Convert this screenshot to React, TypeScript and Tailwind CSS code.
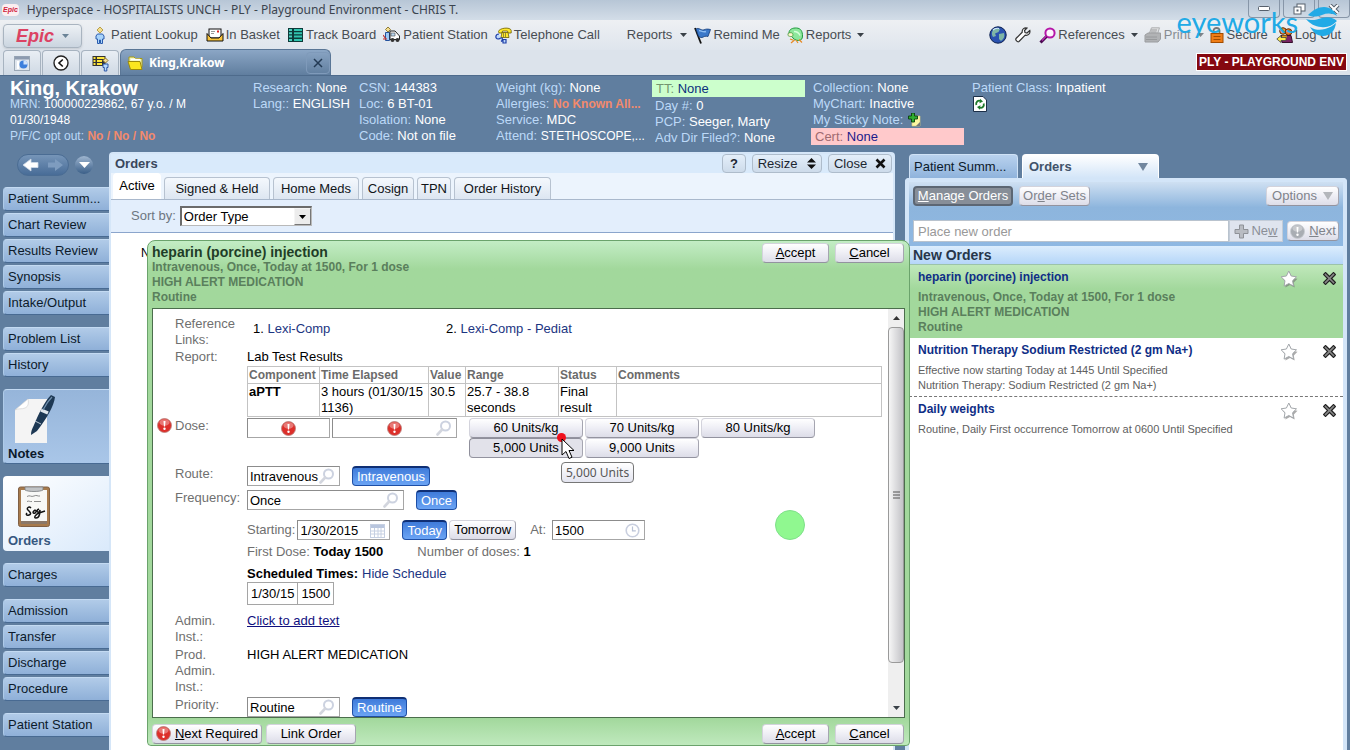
import type { ReactNode } from "react";

/* ---------- icons ---------- */

const Svg = ({ w, h, box, children, cls = "" }: { w: number; h: number; box?: string; children: ReactNode; cls?: string }) => (
  <svg width={w} height={h} viewBox={box ?? `0 0 ${w} ${h}`} className={`shrink-0 ${cls}`} aria-hidden="true">
    {children}
  </svg>
);

const Caret = ({ color = "#3a4148" }: { color?: string }) => (
  <Svg w={7} h={4}>
    <path d="M0 0h7L3.500 4z" fill={color} />
  </Svg>
);

const Alert = ({ gray = false, size = 15 }: { gray?: boolean; size?: number }) => (
  <Svg w={size} h={size} box="0 0 15 15">
    <circle cx="7.500" cy="7.500" r="7" fill={gray ? "#a9adb3" : "#dd2f2a"} stroke={gray ? "#c8cbd0" : "#b8837f"} strokeWidth="0.800" />
    <ellipse cx="7.500" cy="4.500" rx="5" ry="3.200" fill="#fff" opacity="0.350" />
    <path d="M6.500 3h2l-.4 5.500h-1.200z" fill="#fff" />
    <circle cx="7.500" cy="10.800" r="1.200" fill="#fff" />
  </Svg>
);

const Lens = () => (
  <Svg w={16} h={16} cls="mr-1">
    <circle cx="9.500" cy="6" r="4.500" fill="#fff" stroke="#ccd2e0" strokeWidth="2" />
    <path d="M6.200 9.500L1.500 14.500" stroke="#d3d6de" strokeWidth="2.600" strokeLinecap="round" />
  </Svg>
);

const CalendarIcon = () => (
  <Svg w={15} h={15} cls="mr-1">
    <rect x="0.500" y="1.500" width="14" height="13" fill="#fff" stroke="#c6d0e2" />
    <path d="M1 3.500h13" stroke="#b9c6de" strokeWidth="3" />
    <path d="M1 8h13M1 11h13M4.500 5v9M8 5v9M11 5v9" stroke="#c6d0e2" />
  </Svg>
);

const ClockIcon = () => (
  <Svg w={15} h={15} cls="mr-1">
    <circle cx="7.500" cy="7.500" r="6.300" fill="#fff" stroke="#c9cfdf" strokeWidth="1.600" />
    <path d="M7.500 3.500v4.300h3.300" stroke="#b9c2d6" strokeWidth="1.200" fill="none" />
  </Svg>
);

const PersonIcon = () => (
  <Svg w={10} h={17}>
    <path d="M5 0l3 3-3 3-3-3z" fill="#f3dd8e" stroke="#b8a04a" />
    <path d="M2.500 7h5l1.500 2v3H7.500v4.500H5.500V13h-1v3.500h-2V12H1V9z" fill="#a9d4fb" stroke="#2b5cae" />
  </Svg>
);

const BasketIcon = () => (
  <Svg w={18} h={14}>
    <rect x="3" y="1" width="12" height="9" fill="#fff" stroke="#111" />
    <path d="M5 3.500h4M5 5.500h3" stroke="#999" />
    <rect x="11" y="2.500" width="2" height="2" fill="#d22" />
    <path d="M1 5.500v7.500h16V5.500L13 10H5z" fill="#f9c33a" stroke="#111" />
  </Svg>
);

const BoardIcon = () => (
  <Svg w={15} h={14}>
    <rect width="15" height="14" fill="#0d3b3a" />
    <path d="M1 2h3M1 5.300h3M1 8.600h3M1 12h3" stroke="#49d0be" strokeWidth="2" />
    <path d="M6 2h8M6 5.300h8M6 8.600h8M6 12h8" stroke="#2fc4ae" strokeWidth="2" />
  </Svg>
);

const StationIcon = () => (
  <Svg w={18} h={16}>
    <path d="M5 0l2.500 2.500L5 5 2.500 2.500z" fill="#f3dd8e" stroke="#8f7b35" />
    <path d="M2.500 5.500h4v8h-4z" fill="#9cc9f5" stroke="#24519c" />
    <path d="M7 4h5l4.500 5v3.500H7z" fill="#fff" stroke="#222" />
    <path d="M8 6h4v3H8z" fill="#b9d7f2" stroke="#444" strokeWidth="0.600" />
    <circle cx="9.500" cy="13" r="2" fill="#333" />
    <circle cx="14.500" cy="13" r="2" fill="#333" />
    <path d="M0 8l3 4M0 12h4" stroke="#b33" strokeWidth="1.200" />
  </Svg>
);

const PhoneIcon = () => (
  <Svg w={17} h={17}>
    <path d="M3.500 4.500C4 1 15.500-.5 16.200 3.500v2.500h-3l-.7-2h-5L7 6H4z" fill="#ffe92e" stroke="#6b5c00" strokeWidth="0.800" />
    <path d="M7 5.500h6l1 5H6z" fill="#ffe92e" stroke="#6b5c00" strokeWidth="0.800" />
    <path d="M8 7h4M8 9h4" stroke="#333" strokeDasharray="1 1" />
    <path d="M4 7c-4 0-4 5-1 5 2 0 3-2 4-1s0 3-1 3.500M8 12.500h3v3.500H8z" fill="#bcd8fa" stroke="#1f3fa8" strokeWidth="1.200" />
  </Svg>
);

const FlagIcon = () => (
  <Svg w={17} h={17}>
    <path d="M1 1l6 15.500" stroke="#111" strokeWidth="1.800" />
    <path d="M2 2c3-2 5 2 8 .8 2-.8 3-1 6.500-.3l-2.500 7c-3-1-4 .5-6 1C6.500 11 5.500 9.500 4.500 9.200z" fill="#3a78c9" stroke="#123b78" strokeWidth="0.800" />
    <path d="M5 3.500c2 0 4 2 7 1" stroke="#8bbcf2" strokeWidth="1.400" fill="none" />
  </Svg>
);

const ParrotIcon = () => (
  <Svg w={17} h={17}>
    <path d="M2 6C2 2 6 .8 9.500 1c4.500.3 6 3.500 6 8 0 3-1.500 4.500-4 4.500S6 12 5 9.500C4 9 2 8.500 2 6z" fill="#8de79c" stroke="#1f9a3c" />
    <path d="M1 6.500c2-1.500 5-1 5 1.200C6 10 3 10 1 8.500z" fill="#fff6d0" stroke="#4b9a3c" strokeWidth="0.800" />
    <path d="M7 4.500c3 0 5 1.500 6 4" stroke="#d6ffd9" strokeWidth="1.400" fill="none" />
    <path d="M3 12l4 1.500L4 16M9 13l2 3M12 12.500l3 3" stroke="#e88a25" strokeWidth="1.200" fill="none" />
  </Svg>
);

const GlobeIcon = () => (
  <Svg w={18} h={18}>
    <circle cx="9" cy="9" r="8.200" fill="#2a52b0" stroke="#0a1f4e" />
    <path d="M4 4c2-2 5-2.500 7-1L9.500 6 6 7.500 7 10l-3 1C2.500 9 2.500 6 4 4zM10 8l5-1c1 3 0 6-3 8l-2-2z" fill="#7fb6a6" />
    <path d="M4 4c2-2 4-2 6-1.500" stroke="#cfe6ff" strokeWidth="1.200" fill="none" />
  </Svg>
);

const WrenchIcon = () => (
  <Svg w={16} h={16}>
    <path
      d="M14.800 3.500L12 6 10 5.500 9.500 3.500 12 1C9.500.3 6.800 2 7.200 5.200L1 11.500c-1 1.500 1.500 4 3 3l6.200-6.300c3 .6 5.300-1.700 4.600-4.700z"
      fill="#fff"
      stroke="#333"
      strokeWidth="1.200"
    />
  </Svg>
);

const PinkLens = () => (
  <Svg w={17} h={17}>
    <circle cx="11" cy="6" r="4.600" fill="#fdf3fd" stroke="#b516a8" strokeWidth="2" />
    <path d="M7.500 9.500L1.500 15.500" stroke="#4a0b52" strokeWidth="3" />
    <path d="M7.200 9.200L3 13.500" stroke="#c42ab8" strokeWidth="1.200" />
  </Svg>
);

const PrinterIcon = () => (
  <Svg w={18} h={16}>
    <path d="M5 7L7.500.8h8L13.500 7z" fill="#d8d8d8" stroke="#888" />
    <path d="M1 8l3-2h12.500v6L14 15H1z" fill="#8f8f8f" stroke="#6d6d6d" />
    <path d="M2 10h11M2 12.500h11M7 3h6M6.500 5h6" stroke="#666" />
  </Svg>
);

const LockIcon = () => (
  <Svg w={14} h={16}>
    <path d="M3.500 7V4c0-4 6-4 6 0v3" fill="none" stroke="#777" strokeWidth="1.800" />
    <rect x="1" y="6.500" width="12" height="9" fill="#ef7d16" stroke="#a24c00" />
    <path d="M3.500 9.500h7M3.500 12.500h7" stroke="#a24c00" />
  </Svg>
);

const LogoutIcon = () => (
  <Svg w={17} h={16}>
    <circle cx="7" cy="4" r="3.300" fill="#f0903c" stroke="#5c2b06" />
    <circle cx="12.500" cy="5" r="3.300" fill="#e8761c" stroke="#5c2b06" />
    <path d="M5 8.500h10l1.500 7H6z" fill="#7a2464" stroke="#35102c" />
    <path d="M6 8.500h5l-1 4H6z" fill="#d89a17" />
    <path d="M.8 12L5 8.500v2h5v3H5v2z" fill="#ffed4a" stroke="#444" strokeWidth="0.800" />
  </Svg>
);

const FolderIcon = () => (
  <Svg w={16} h={14}>
    <path d="M2 6V1h5l1.500 1.500H15V11" fill="#f5f7b9" stroke="#a79b12" />
    <path d="M1 5.500h12l2 8H3.500z" fill="#fbe61f" stroke="#9d8a0c" />
    <path d="M4 3.500h9" stroke="#fff" strokeWidth="1.500" />
  </Svg>
);

const ScreenIcon = () => (
  <Svg w={16} h={15}>
    <rect x="0.500" y="0.500" width="15" height="14" fill="#dfe6ee" stroke="#9aa7b5" />
    <path d="M1 2h14" stroke="#8d9bb0" strokeWidth="3" />
    <path d="M4 5v8" stroke="#fff" strokeWidth="2" />
    <circle cx="9.500" cy="8.500" r="4" fill="#3c7fdc" />
    <path d="M9.500 8.500V4.500a4 4 0 0 1 4 4z" fill="#cfe2fb" />
  </Svg>
);

const BackClock = () => (
  <Svg w={16} h={16}>
    <circle cx="8" cy="8" r="7" fill="#fff" stroke="#222" strokeWidth="1.400" />
    <path d="M9.800 4.500L6 8l3.800 3.500" stroke="#111" strokeWidth="1.600" fill="none" />
  </Svg>
);

const ListIcon = () => (
  <Svg w={17} h={17}>
    <rect x="0.500" y="1" width="13" height="10" fill="#333" />
    <path d="M1.500 3h2M1.500 6h2M1.500 9h2M5 3h7.500M5 6h5M5 9h5" stroke="#ffe63b" strokeWidth="2" />
    <path d="M13.500 3l2.500 2.500L13.500 8 11 5.500z" fill="#f6df96" stroke="#8b7632" />
    <path d="M11 9h5v3.500h-1.200V16h-2.500v-3.500H11z" fill="#b9dafc" stroke="#2a56a5" />
  </Svg>
);

const StickyIcon = () => (
  <Svg w={14} h={14}>
    <path d="M5 3h8v10H5z" fill="#fdf6a2" stroke="#d9cf7d" strokeWidth="0.600" />
    <path d="M9 13l4-4v4z" fill="#777" />
    <path d="M4.500 0h3v3h3v3h-3v3h-3V6h-3V3h3z" fill="#2fae2f" stroke="#0a400a" strokeWidth="0.900" />
  </Svg>
);

const RefreshIcon = () => (
  <Svg w={14} h={16}>
    <path d="M.5.500H10L13.500 4v11.500H.5z" fill="#fff" stroke="#1c2f48" />
    <path d="M3.300 9C2.500 6 5 4 7.500 5" stroke="#1d7a2a" strokeWidth="1.800" fill="none" />
    <path d="M7 2.800L10 5.500 6.500 7.300z" fill="#1d7a2a" />
    <path d="M10.700 7.500c.8 3-1.700 5-4.200 4" stroke="#1d7a2a" strokeWidth="1.800" fill="none" />
    <path d="M7 13.700L4 11l3.500-1.800z" fill="#1d7a2a" />
  </Svg>
);

const Star = () => (
  <Svg w={20} h={20}>
    <path d="M11 3.200l2.300 4.700 5.200.8-3.700 3.700.9 5.200-4.700-2.500-4.700 2.500.9-5.200-3.700-3.700 5.200-.8z" fill="#666" opacity="0.550" />
    <path d="M9.800 1l2.400 5 5.300.8-3.900 3.900.9 5.400-4.700-2.600-4.700 2.600.9-5.400L2.100 6.800 7.400 6z" fill="#fff" stroke="#a3a7ab" />
  </Svg>
);

const CrossMark = () => (
  <Svg w={13} h={13}>
    <path d="M2.500 2.500l8 8M10.500 2.500l-8 8" stroke="#222" strokeWidth="4" strokeLinecap="square" />
    <path d="M2.500 2.500l8 8M10.500 2.500l-8 8" stroke="#888" strokeWidth="1.600" strokeLinecap="square" />
  </Svg>
);

const NoteArt = () => (
  <Svg w={42} h={50}>
    <path d="M1 16L14 5h19v44H1z" fill="#f4f4f4" />
    <path d="M1 16L14 5c1 4 0 8-3 9-3 1.500-7 0-10 2z" fill="#fff" stroke="#ccc" strokeWidth="0.600" />
    <path d="M37 1l4 2c-1 9-8 21-18 34l-6 4c0-4 1-6 3-10C25 19 31 7 37 1z" fill="#1d3854" />
    <path d="M27 16l7 3" stroke="#dfe6ec" strokeWidth="3.500" />
    <path d="M21 27l6 3" stroke="#b9c6d2" strokeWidth="1" />
    <path d="M38 3c-4 4-7 9-9 13" stroke="#6f8fae" strokeWidth="1.200" fill="none" />
  </Svg>
);

const ClipboardArt = () => (
  <Svg w={32} h={41}>
    <rect x="0.500" y="1" width="31" height="39.500" rx="2" fill="#a77a4c" stroke="#806045" />
    <rect x="3" y="4" width="26" height="31" fill="#f8f8f6" />
    <path d="M3 35h26v3H3z" fill="#8b7868" />
    <path d="M7 1h18v3c-3 2-15 2-18 0z" fill="#c2c4c6" stroke="#7b7d80" strokeWidth="0.800" />
    <path d="M9 10.500c3-2 4 1 7-.5s3 .5 6 0M9 15.500c2-1 3 .5 5 0m2 0h7" stroke="#8c8c8c" fill="none" />
    <path d="M13 22c-2-2-5 0-3 2s4 4 1 5-3-1-2-2M15 26c3-4 4 0 2 1s-3-1 0-3M21 23c-3 1-2 4 0 3l1-2c0 4-1 8-4 8s0-4 3-5l6-2" stroke="#111" strokeWidth="1.500" fill="none" />
  </Svg>
);

/* ---------- shared pieces ---------- */

const ToolItem = ({ icon, label, caret, cls = "" }: { icon?: ReactNode; label: string; caret?: boolean; cls?: string }) => (
  <button type="button" className={`flex items-center gap-1 whitespace-nowrap text-[13px] leading-4 text-[#484d53] ${cls}`}>
    {icon}
    <span>{label}</span>
    {caret && (
      <span className="ml-1">
        <Caret />
      </span>
    )}
  </button>
);

const Field = ({ label, children, cls = "text-white" }: { label: string; children: ReactNode; cls?: string }) => (
  <div className="truncate">
    <span className="text-[#bcd9f8]">{label}</span> <span className={cls}>{children}</span>
  </div>
);

const SideButton = ({ children }: { children: ReactNode }) => (
  <button
    type="button"
    className="h-6 w-full truncate rounded-l border-y border-l border-t-[#c3daf2] border-b-[#486a92] border-l-[#aecbe9] bg-gradient-to-b from-[#b1cbe8] to-[#8fb0d8] pl-1 text-left text-[13px] leading-5 text-[#0c1a2b]"
  >
    {children}
  </button>
);

const PushButton = ({ children, cls = "" }: { children: ReactNode; cls?: string }) => (
  <button
    type="button"
    className={`flex h-5 items-center justify-center whitespace-nowrap rounded border border-[#d3d3dc] border-r-[#a5a5b0] border-b-[#93939f] bg-gradient-to-b from-white via-[#eeeef5] to-[#dddde8] text-[13px] leading-4 text-black ${cls}`}
  >
    {children}
  </button>
);

const BlueButton = ({ children }: { children: ReactNode }) => (
  <button
    type="button"
    className="h-5 rounded border border-[#1e4fa6] border-t-2 border-t-[#0f2f74] bg-gradient-to-b from-[#3f7bda] to-[#6ba4f4] px-1 text-[13px] leading-4 text-white"
  >
    {children}
  </button>
);

const TextBox = ({ id, value, icon, cls = "", label }: { id: string; value: string; icon?: ReactNode; cls?: string; label?: string }) => (
  <div className={`flex h-5 items-center border border-[#a6a6a6] border-t-[#8c8c8c] border-l-[#8c8c8c] bg-white ${cls}`}>
    <input id={id} aria-label={label} defaultValue={value} className="h-full w-full min-w-0 flex-1 bg-transparent pl-0.5 text-[13px] text-black outline-none" />
    {icon}
  </div>
);

const FormRow = ({ label, htmlFor, alert, children, cls = "" }: { label: ReactNode; htmlFor?: string; alert?: boolean; children: ReactNode; cls?: string }) => (
  <div className={`grid grid-cols-[18px_72px_1fr] ${cls}`}>
    <div>{alert && <Alert />}</div>
    <label htmlFor={htmlFor} className="text-[#6f6f6f]">
      {label}
    </label>
    <div className="min-w-0">{children}</div>
  </div>
);

const U = ({ children }: { children: ReactNode }) => <span className="underline underline-offset-1">{children}</span>;

/* ---------- top of the window ---------- */

function TitleBar() {
  return (
    <header className="relative flex h-5 shrink-0 items-center bg-gradient-to-b from-[#b7c6d6] to-[#d3dde8]">
      <div className="ml-0.5 rounded-sm bg-[#fbeef0] px-px text-[7px] leading-3 font-bold text-[#d0203c] italic">Epic</div>
      <h1 className="ml-2 font-['Noto_Sans','Open_Sans',sans-serif] text-[12px] leading-5 text-[#3b444f]">Hyperspace - HOSPITALISTS UNCH - PLY - Playground Environment - CHRIS T.</h1>
      <div className="ml-auto flex h-full gap-[3px]">
        <button type="button" aria-label="Minimize" className="flex h-[18px] w-8 items-center justify-center rounded-b border border-t-0 border-[#8796a8]">
          <Svg w={12} h={5}>
            <rect x="0.500" y="0.500" width="11" height="4" rx="1" fill="#fff" stroke="#56606c" />
          </Svg>
        </button>
        <button type="button" aria-label="Restore" className="flex h-[18px] w-8 items-center justify-center rounded-b border border-t-0 border-[#8796a8]">
          <Svg w={13} h={12}>
            <rect x="4" y="1" width="8" height="7" fill="#fff" stroke="#56606c" />
            <rect x="1" y="4" width="7" height="7" fill="#fff" stroke="#56606c" />
            <rect x="3.500" y="6.500" width="2" height="2" fill="#56606c" />
          </Svg>
        </button>
        <button type="button" aria-label="Close window" className="flex h-[18px] w-8 items-center justify-center rounded-b border border-t-0 border-[#8796a8]">
          <Svg w={12} h={10}>
            <path d="M2 1l8 8M10 1L2 9" stroke="#56606c" strokeWidth="4" />
            <path d="M2 1l8 8M10 1L2 9" stroke="#fff" strokeWidth="2" />
          </Svg>
        </button>
      </div>
      <div className="absolute top-1.5 right-3 z-20 flex items-center gap-2 text-[#21aae6]">
        <span className="font-['Lato',sans-serif] text-[29px] leading-8">eyeworks</span>
        <Svg w={32} h={32}>
          <path d="M2 9C7 4 12 1 18 1c6 0 11 4 13 9-5-3-10-3-15-1-6 2-10 2-14 0z" fill="#21aae6" />
          <path d="M0 13c6 2 10 1 16-1 6-1.500 11-.5 15 3-5 5-10 7-16 6C9 20.500 4 18 0 13z" fill="#21aae6" />
          <path d="M4 21c5 3 10 3.500 15 2 5-1.300 8-3.500 11-6-1 8-6 13-13 13-6 0-10-4-13-9z" fill="#21aae6" />
        </Svg>
      </div>
    </header>
  );
}

function Toolbar() {
  return (
    <div className="flex h-[30px] shrink-0 items-center bg-gradient-to-b from-[#eef0f3] to-[#dfe5ed]">
      <button
        type="button"
        className="ml-[3px] mt-0.5 flex h-6 w-[79px] items-center justify-center gap-2 rounded border border-[#a9b4c0] bg-gradient-to-b from-[#edf1f5] to-[#cbd5e0] shadow-sm"
      >
        <span className="text-[18px] leading-5 font-bold text-[#dc4263] italic">Epic</span>
        <Caret color="#6b8397" />
      </button>
      <ToolItem cls="ml-[13px] !gap-1.5" icon={<PersonIcon />} label="Patient Lookup" />
      <ToolItem cls="ml-2 !gap-0.5" icon={<BasketIcon />} label="In Basket" />
      <ToolItem cls="ml-2 !gap-[3px]" icon={<BoardIcon />} label="Track Board" />
      <ToolItem cls="ml-[7px] !gap-0.5" icon={<StationIcon />} label="Patient Station" />
      <ToolItem cls="ml-[7px] !gap-0.5" icon={<PhoneIcon />} label="Telephone Call" />
      <ToolItem cls="ml-[27px]" label="Reports" caret />
      <ToolItem cls="ml-[7px] !gap-0.5" icon={<FlagIcon />} label="Remind Me" />
      <ToolItem cls="ml-[7px] !gap-0.5" icon={<ParrotIcon />} label="Reports" caret />
      <div className="ml-auto flex items-center pr-[9px]">
        <button type="button" aria-label="Web">
          <GlobeIcon />
        </button>
        <button type="button" aria-label="Tools" className="ml-2">
          <WrenchIcon />
        </button>
        <ToolItem cls="ml-2 !gap-0.5" icon={<PinkLens />} label="References" caret />
        <ToolItem cls="ml-1.5 !gap-0.5 opacity-60" icon={<PrinterIcon />} label="Print" caret />
        <ToolItem cls="ml-1.5 !gap-[3px]" icon={<LockIcon />} label="Secure" />
        <ToolItem cls="ml-2 !gap-0.5" icon={<LogoutIcon />} label="Log Out" />
      </div>
    </div>
  );
}

function WorkspaceTabs() {
  const small = "flex h-[25px] items-center justify-center rounded-t border border-b-0 border-[#a7b3c0] bg-gradient-to-b from-[#e9eef4] to-[#cfd9e4]";
  return (
    <nav className="flex h-[26px] shrink-0 items-end border-b border-[#4e6b8c] bg-[#dce3eb] pl-[3px]">
      <button type="button" aria-label="Home" className={`w-[38px] ${small}`}>
        <ScreenIcon />
      </button>
      <button type="button" aria-label="Back" className={`ml-px w-[38px] ${small}`}>
        <BackClock />
      </button>
      <button type="button" aria-label="Patient lists" className={`ml-px w-[38px] ${small}`}>
        <ListIcon />
      </button>
      <div className="ml-px flex h-[26px] w-[211px] items-center rounded-t-md border border-b-0 border-[#5a7696] bg-gradient-to-b from-[#8ba6c5] to-[#607e9f] pl-1.5">
        <FolderIcon />
        <span className="ml-1.5 font-['Noto_Sans','Open_Sans',sans-serif] text-[12px] leading-5 font-bold text-white">King,Krakow</span>
        <button type="button" aria-label="Close King,Krakow" className="ml-auto flex h-[22px] w-6 items-center justify-center rounded border border-[#7f9aba]">
          <Svg w={10} h={10}>
            <path d="M1 1l8 8M9 1L1 9" stroke="#233a54" strokeWidth="1.500" />
          </Svg>
        </button>
      </div>
      <div className="mr-[3px] mb-1 ml-auto border border-white bg-[#850810] px-0.5 text-[12px] leading-4 font-bold text-white">PLY - PLAYGROUND ENV</div>
    </nav>
  );
}

function PatientHeader() {
  return (
    <section className="grid h-[76px] shrink-0 grid-cols-[243px_106px_137px_156px_156px_3px_1fr] pt-1 pl-2.5 text-[13px] leading-4 text-white">
      <div>
        <h2 className="text-[20px] leading-4 font-bold">King, Krakow</h2>
        <div className="text-[12px]">
          <Field label="MRN:">100000229862, 67 y.o. / M</Field>
          <div>01/30/1948</div>
          <Field label="P/F/C opt out:" cls="font-bold text-[#f28a6c]">
            No / No / No
          </Field>
        </div>
      </div>
      <div>
        <Field label="Research:">None</Field>
        <Field label="Lang::">ENGLISH</Field>
      </div>
      <div>
        <Field label="CSN:">144383</Field>
        <Field label="Loc:">6 BT-01</Field>
        <Field label="Isolation:">None</Field>
        <Field label="Code:">Not on file</Field>
      </div>
      <div>
        <Field label="Weight (kg):">None</Field>
        <Field label="Allergies:" cls="text-[12px] font-bold text-[#f28a6c]">
          No Known All...
        </Field>
        <Field label="Service:">MDC</Field>
        <Field label="Attend:" cls="text-[12px] text-white">
          STETHOSCOPE,...
        </Field>
      </div>
      <div>
        <div className="mb-px w-[153px] bg-[#ccffcc] pl-1 leading-[17px] text-[#0b2f7c]">
          <span className="text-[#73946f]">TT:</span> None
        </div>
        <div className="pl-[3px]">
          <Field label="Day #:">0</Field>
          <Field label="PCP:">Seeger, Marty</Field>
          <Field label="Adv Dir Filed?:">None</Field>
        </div>
      </div>
      <div />
      <div className="grid grid-cols-[161px_1fr]">
        <div>
          <div className="pl-0.5">
            <Field label="Collection:">None</Field>
            <Field label="MyChart:">Inactive</Field>
            <div className="flex items-center gap-1">
              <span className="text-[#bcd9f8]">My Sticky Note:</span>
              <StickyIcon />
            </div>
          </div>
          <div className="w-[153px] bg-[#ffc9cb] pl-1 leading-[17px] text-[#1b1b8a]">
            <span className="text-[#a06a70]">Cert:</span> None
          </div>
        </div>
        <div>
          <Field label="Patient Class:">Inpatient</Field>
          <button type="button" aria-label="Refresh" className="ml-px block">
            <RefreshIcon />
          </button>
        </div>
      </div>
    </section>
  );
}

/* ---------- activities ---------- */

const groupA = ["Patient Summ...", "Chart Review", "Results Review", "Synopsis", "Intake/Output"];
const groupB = ["Problem List", "History"];
const groupC = ["Admission", "Transfer", "Discharge", "Procedure"];

const SideGroup = ({ items }: { items: string[] }) => (
  <div className="flex flex-col gap-0.5">
    {items.map((t) => (
      <SideButton key={t}>{t}</SideButton>
    ))}
  </div>
);

function Sidebar() {
  return (
    <nav className="flex w-[109px] shrink-0 flex-col gap-3 pt-1 pl-[3px]">
      <div className="flex h-[21px] items-center gap-1.5 pl-3.5">
        <button type="button" aria-label="Back" className="flex h-[22px] w-[52px] items-center rounded-full border border-[#4a6c93] bg-gradient-to-b from-[#7695b8] to-[#486c97] pl-1">
          <Svg w={17} h={14}>
            <path d="M1 7l8-6v3.500h7v5H9V13z" fill="#fff" stroke="#cfdbe8" strokeWidth="0.800" />
          </Svg>
          <Svg w={17} h={14} cls="ml-2">
            <path d="M16 7L8 1v3.500H1v5h7V13z" fill="#7e9cbf" />
          </Svg>
        </button>
        <button type="button" aria-label="History" className="flex h-[18px] w-[18px] items-center justify-center rounded-full bg-gradient-to-b from-[#9fb6d0] to-[#3b5f88]">
          <Svg w={11} h={6}>
            <path d="M0 0h11L5.500 6z" fill="#fff" />
          </Svg>
        </button>
      </div>
      <SideGroup items={groupA} />
      <SideGroup items={groupB} />
      <button
        type="button"
        className="flex h-[75px] flex-col justify-between rounded-l border-y border-l border-t-[#c3daf2] border-b-[#486a92] border-l-[#aecbe9] bg-gradient-to-b from-[#96b5da] to-[#a9c6e8] pt-1 pl-1 text-left text-[13px] leading-5 font-bold text-[#0c1a2b]"
      >
        <span className="ml-1.5">
          <NoteArt />
        </span>
        <span>Notes</span>
      </button>
      <button
        type="button"
        className="-mr-1 flex h-[75px] flex-col justify-between rounded-l bg-gradient-to-br from-white to-[#d9e9fb] pt-2.5 pl-[5px] text-left text-[13px] leading-5 font-bold text-[#365880]"
      >
        <span className="ml-2.5">
          <ClipboardArt />
        </span>
        <span>Orders</span>
      </button>
      <SideButton>Charges</SideButton>
      <SideGroup items={groupC} />
      <SideButton>Patient Station</SideButton>
    </nav>
  );
}

function OrdersPanel() {
  const tab = "flex h-[22px] items-center justify-center rounded-t border border-b-0 border-[#b7c2d0] bg-gradient-to-b from-[#f4f8fd] to-[#dde6f1] text-[13px] text-[#101418]";
  const head = "flex h-[19px] items-center justify-center rounded border border-[#aebccb] bg-gradient-to-b from-[#e4effa] to-[#cddbea] text-[13px] leading-4 text-[#1c2630]";
  return (
    <main className="mt-0.5 flex min-w-0 flex-1 flex-col rounded-t border-x-2 border-t-2 border-[#d5e6f8] bg-white">
      <div className="flex h-[19px] shrink-0 items-center bg-[#d9eafb] pr-px pl-1">
        <h2 className="text-[13px] leading-5 font-bold text-[#39475c]">Orders</h2>
        <button type="button" aria-label="Help" className={`ml-auto w-6 font-bold ${head}`}>
          ?
        </button>
        <button type="button" className={`ml-1.5 w-[70px] gap-2.5 ${head}`}>
          Resize
          <Svg w={9} h={11}>
            <path d="M4.500 0L9 4.500H0zM4.500 11L9 6.500H0z" fill="#111" />
          </Svg>
        </button>
        <button type="button" className={`ml-1.5 w-16 gap-2 ${head}`}>
          Close
          <Svg w={11} h={11}>
            <path d="M1.500 1.500l8 8M9.500 1.500l-8 8" stroke="#111" strokeWidth="2.600" />
          </Svg>
        </button>
      </div>
      <div className="flex h-[27px] shrink-0 items-end gap-[3px] border-b border-[#a9b8cc] bg-[#ecf4fd] pl-0.5">
        <button type="button" className="h-[26px] w-12 rounded-t bg-white text-[13px] text-black">
          Active
        </button>
        <button type="button" className={`w-[106px] ${tab}`}>
          Signed &amp; Held
        </button>
        <button type="button" className={`w-[86px] ${tab}`}>
          Home Meds
        </button>
        <button type="button" className={`w-[52px] ${tab}`}>
          Cosign
        </button>
        <button type="button" className={`w-[34px] ${tab}`}>
          TPN
        </button>
        <button type="button" className={`w-[97px] ${tab}`}>
          Order History
        </button>
      </div>
      <div className="flex h-[33px] shrink-0 items-center gap-1 border-b border-[#8ba5cc] bg-[#e3eefc] pl-5 text-[13px]">
        <label htmlFor="sort" className="text-[#6d7681]">
          Sort by:
        </label>
        <div className="relative">
          <select id="sort" className="block h-5 w-[132px] appearance-none border border-t-2 border-l-2 border-[#b9b9b9] border-t-[#6b6b6b] border-l-[#6b6b6b] bg-white pl-0.5 text-[13px] leading-4 text-black">
            <option>Order Type</option>
          </select>
          <span className="pointer-events-none absolute top-0.5 right-px flex h-[17px] w-[17px] items-center justify-center border border-[#f5f5f5] border-r-[#777] border-b-[#777] bg-[#ececec]">
            <Caret color="#000" />
          </span>
        </div>
      </div>
      <div className="pt-3 pl-[30px] text-[12px] leading-4 text-black">N</div>
    </main>
  );
}

/* ---------- order composer ---------- */

const doseButtons = ["60 Units/kg", "70 Units/kg", "80 Units/kg"];

function OrderForm() {
  const th = "h-[17px] border border-[#c3c3c3] px-px text-left text-[12px] leading-4 font-bold text-[#6b6b6b]";
  const td = "border border-[#c3c3c3] px-px align-top";
  return (
    <form className="relative min-w-0 flex-1 px-1 pt-[7px] text-[13px] leading-4 text-black" onSubmit={(e) => e.preventDefault()}>
      <FormRow label="Reference Links:">
        <div className="flex pt-[5px] pl-1.5">
          <div className="w-[193px]">
            1.{" "}
            <a href="#lexi" className="text-[#1b3582]">
              Lexi-Comp
            </a>
          </div>
          <div>
            2.{" "}
            <a href="#lexi-ped" className="text-[#1b3582]">
              Lexi-Comp - Pediat
            </a>
          </div>
        </div>
      </FormRow>
      <FormRow label="Report:" cls="mt-px">
        <div className="mb-px">Lab Test Results</div>
        <table className="w-[635px] table-fixed border-collapse">
          <colgroup>
            <col className="w-[72px]" />
            <col className="w-[109px]" />
            <col className="w-[37px]" />
            <col className="w-[93px]" />
            <col className="w-[58px]" />
            <col />
          </colgroup>
          <thead>
            <tr>
              <th className={th}>Component</th>
              <th className={th}>Time Elapsed</th>
              <th className={th}>Value</th>
              <th className={th}>Range</th>
              <th className={th}>Status</th>
              <th className={th}>Comments</th>
            </tr>
          </thead>
          <tbody>
            <tr>
              <td className={`font-bold ${td}`}>aPTT</td>
              <td className={td}>3 hours (01/30/15 1136)</td>
              <td className={td}>30.5</td>
              <td className={td}>25.7 - 38.8 seconds</td>
              <td className={td}>Final result</td>
              <td className={td} />
            </tr>
          </tbody>
        </table>
      </FormRow>
      <FormRow label="Dose:" htmlFor="dose" alert cls="mt-px">
        <div className="flex items-start">
          <div className="relative">
            <TextBox id="dose" value="" cls="w-[83px]" />
            <span className="pointer-events-none absolute inset-0 flex items-center justify-center">
              <Alert />
            </span>
          </div>
          <div className="relative ml-0.5">
            <TextBox id="dose-unit" label="Dose unit" value="" icon={<Lens />} cls="w-[125px]" />
            <span className="pointer-events-none absolute inset-0 flex items-center justify-center">
              <Alert />
            </span>
          </div>
          <div className="ml-3 grid grid-cols-[114px_114px_114px] gap-x-0.5">
            {doseButtons.map((d) => (
              <PushButton key={d}>{d}</PushButton>
            ))}
            <div className="relative">
              <PushButton cls="w-full !bg-none bg-[#e2e2ea] !border-t-[#8f8f9b] !border-l-[#8f8f9b]">5,000 Units</PushButton>
              <span className="absolute top-[-5px] left-[88px] h-[9px] w-[9px] rounded-full bg-[#f0101c]" />
              <div role="tooltip" className="absolute top-6 left-[92px] z-10 rounded border border-[#767676] bg-gradient-to-b from-white to-[#e4e5f0] px-1 font-['Noto_Sans','Open_Sans',sans-serif] text-[12px] leading-[19px] whitespace-nowrap text-[#575757]">
                5,000 Units
              </div>
              <Svg w={14} h={22} cls="absolute top-0 left-[92px] z-20">
                <path d="M1 1v16l4-3.500 3 7 3-1.300-3-6.700h5z" fill="#fff" stroke="#000" />
              </Svg>
            </div>
            <PushButton>9,000 Units</PushButton>
          </div>
        </div>
      </FormRow>
      <FormRow label="Route:" htmlFor="route" cls="mt-2">
        <div className="flex items-center gap-3">
          <TextBox id="route" value="Intravenous" icon={<Lens />} cls="w-[93px]" />
          <BlueButton>Intravenous</BlueButton>
        </div>
      </FormRow>
      <FormRow label="Frequency:" htmlFor="freq" cls="mt-1">
        <div className="flex items-center gap-3">
          <TextBox id="freq" value="Once" icon={<Lens />} cls="w-[157px]" />
          <BlueButton>Once</BlueButton>
        </div>
      </FormRow>
      <FormRow label="" cls="mt-2.5">
        <div className="flex items-center">
          <label htmlFor="start" className="mr-0.5 text-[#6f6f6f]">
            Starting:
          </label>
          <TextBox id="start" value="1/30/2015" icon={<CalendarIcon />} cls="w-[93px]" />
          <div className="ml-3 flex gap-0.5">
            <BlueButton>Today</BlueButton>
            <PushButton cls="px-1">Tomorrow</PushButton>
          </div>
          <label htmlFor="at" className="mr-1.5 ml-3.5 text-[#6f6f6f]">
            At:
          </label>
          <TextBox id="at" value="1500" icon={<ClockIcon />} cls="w-[93px]" />
        </div>
        <div className="mt-1 flex gap-[34px] text-[#6f6f6f]">
          <div>
            First Dose: <b className="text-black">Today 1500</b>
          </div>
          <div>
            Number of doses: <b className="text-black">1</b>
          </div>
        </div>
        <div className="mt-1.5 flex gap-1">
          <b>Scheduled Times:</b>
          <a href="#schedule" className="text-[#1b3582]">
            Hide Schedule
          </a>
        </div>
        <table className="border-collapse">
          <tbody>
            <tr>
              <td className="h-[22px] border border-[#a5a5a5] px-[3px]">1/30/15</td>
              <td className="border border-[#a5a5a5] px-[3px]">1500</td>
            </tr>
          </tbody>
        </table>
      </FormRow>
      <FormRow label={<>Admin.<br />Inst.:</>} cls="mt-2">
        <a href="#instructions" className="text-[#10107e] underline">
          Click to add text
        </a>
      </FormRow>
      <FormRow label={<>Prod.<br />Admin.<br />Inst.:</>} cls="mt-0.5">
        HIGH ALERT MEDICATION
      </FormRow>
      <FormRow label="Priority:" htmlFor="priority" cls="mt-0.5">
        <div className="flex items-center gap-3">
          <TextBox id="priority" value="Routine" icon={<Lens />} cls="w-[93px]" />
          <BlueButton>Routine</BlueButton>
        </div>
      </FormRow>
      <span className="pointer-events-none absolute top-[201px] left-[622px] h-[30px] w-[30px] rounded-full border border-[#7fe08a] bg-[#90f890]" />
    </form>
  );
}

function Scrollbar() {
  return (
    <div className="flex w-4 shrink-0 flex-col bg-[#efefef]">
      <div className="flex h-[18px] items-center justify-center">
        <Svg w={7} h={4}>
          <path d="M0 4h7L3.500 0z" fill="#333" />
        </Svg>
      </div>
      <div className="flex grow-[9] items-center justify-center rounded-sm border border-[#9a9a9a] bg-gradient-to-r from-[#f6f6f6] to-[#c3c3c7]">
        <Svg w={7} h={8}>
          <path d="M0 1h7M0 4h7M0 7h7" stroke="#555" />
        </Svg>
      </div>
      <div className="grow" />
      <div className="flex h-[18px] items-center justify-center">
        <Caret />
      </div>
    </div>
  );
}

function OrderDialog() {
  return (
    <div
      role="dialog"
      aria-label="heparin (porcine) injection"
      className="absolute top-[90px] right-[440px] bottom-1 left-[147px] z-10 flex flex-col rounded-t-lg rounded-b border border-[#6ba36c] bg-gradient-to-b from-[#c3edc5] to-[#a2d89c] to-[28px] px-1"
    >
      <div className="flex h-[67px] shrink-0 pt-1">
        <div className="text-[12px] leading-[15px] font-bold text-[#5a7f5c]">
          <h3 className="text-[14px] leading-[15px] text-[#1f3d27]">heparin (porcine) injection</h3>
          <div>Intravenous, Once, Today at 1500, For 1 dose</div>
          <div>HIGH ALERT MEDICATION</div>
          <div>Routine</div>
        </div>
        <div className="-mt-0.5 mr-px ml-auto flex gap-1.5 self-start">
          <PushButton cls="w-[67px]">
            <U>A</U>ccept
          </PushButton>
          <PushButton cls="w-[69px]">
            <U>C</U>ancel
          </PushButton>
        </div>
      </div>
      <div className="flex min-h-0 flex-1 overflow-hidden border border-[#4b6e4c] bg-white">
        <OrderForm />
        <Scrollbar />
      </div>
      <div className="-mx-1 flex h-[27px] shrink-0 items-center gap-1 rounded-b bg-gradient-to-b from-[#a2d89c] to-[#bfe9bd] px-1 pt-1">
        <PushButton cls="w-[110px] gap-1">
          <Alert />
          <span>
            <U>N</U>ext Required
          </span>
        </PushButton>
        <PushButton cls="w-[90px]">Link Order</PushButton>
        <div className="mr-px ml-auto flex gap-1.5">
          <PushButton cls="w-[67px]">
            <U>A</U>ccept
          </PushButton>
          <PushButton cls="w-[69px]">
            <U>C</U>ancel
          </PushButton>
        </div>
      </div>
    </div>
  );
}

/* ---------- right-hand side ---------- */

type Order = { title: string; lines: string[]; active?: boolean };

const orders: Order[] = [
  { title: "heparin (porcine) injection", lines: ["Intravenous, Once, Today at 1500, For 1 dose", "HIGH ALERT MEDICATION", "Routine"], active: true },
  { title: "Nutrition Therapy Sodium Restricted (2 gm Na+)", lines: ["Effective now starting Today at 1445 Until Specified", "Nutrition Therapy: Sodium Restricted (2 gm Na+)"] },
  { title: "Daily weights", lines: ["Routine, Daily First occurrence Tomorrow at 0600 Until Specified"] },
];

function OrderSidebar() {
  return (
    <aside className="flex w-[445px] shrink-0 flex-col pt-1 pr-[3px]">
      <div className="flex h-6 shrink-0 items-end gap-1 pl-1">
        <button type="button" className="h-6 w-[109px] rounded-t border border-b-0 border-[#cfe2f6] bg-gradient-to-b from-[#b9d2ee] to-[#8fb3dc] pl-1 text-left text-[13px] leading-5 text-[#0c1a2b]">
          Patient Summ...
        </button>
        <button type="button" className="flex h-6 w-[137px] items-center justify-between rounded-t border border-b-0 border-white bg-gradient-to-b from-white to-[#d3e5f8] pr-2.5 pl-1.5 text-[13px] leading-5 font-bold text-[#41536a]">
          Orders
          <Svg w={10} h={8}>
            <path d="M0 0h10L5 8z" fill="#72879f" />
          </Svg>
        </button>
      </div>
      <div className="flex min-h-0 flex-1 flex-col rounded-t border-x-4 border-t-4 border-[#d3e5f8] bg-white">
        <div className="shrink-0 bg-gradient-to-b from-[#cfe0f2] via-[#8db5dd] via-40% to-[#8fb8e2] px-1 pt-1 pb-1">
          <div className="flex items-center gap-1.5">
            <button type="button" className="h-5 w-[100px] rounded border-2 border-[#5c6673] bg-[#878e98] text-[13px] leading-4 text-white">
              <U>M</U>anage Orders
            </button>
            <PushButton cls="w-[71px] !text-[#7f838b]">
              Or<U>d</U>er Sets
            </PushButton>
            <PushButton cls="ml-auto w-[73px] gap-1.5 !text-[#7f838b]">
              Options
              <Svg w={10} h={8}>
                <path d="M0 0h10L5 8z" fill="#b3b6bb" />
              </Svg>
            </PushButton>
          </div>
          <div className="mt-3.5 flex items-center">
            <input
              aria-label="Place new order"
              placeholder="Place new order"
              className="h-[22px] min-w-0 flex-1 border border-[#b9c3ce] bg-white pl-1 text-[13px] leading-4 outline-none placeholder:text-[#999]"
            />
            <button type="button" className="flex h-[22px] w-[54px] items-center justify-center gap-0.5 border border-[#c3ccd8] bg-[#dfe4ee] text-[13px] text-[#8b8f97]">
              <Svg w={15} h={15}>
                <path d="M5.500 1h4v4.500H14v4H9.500V14h-4V9.500H1v-4h4.500z" fill="#b9bcc2" stroke="#8e9197" />
              </Svg>
              <span>
                Ne<U>w</U>
              </span>
            </button>
            <PushButton cls="ml-1 w-[52px] gap-1 !text-[#7f838b]">
              <Alert gray />
              <span>
                <U>N</U>ext
              </span>
            </PushButton>
          </div>
        </div>
        <h3 className="h-[19px] shrink-0 border-b border-[#9cc3a9] bg-gradient-to-b from-[#dcedfd] to-[#b5d6f8] pl-1 text-[14px] leading-[18px] font-bold text-[#27364a]">New Orders</h3>
        <ul>
          {orders.map((o, i) => (
            <li
              key={o.title}
              className={
                o.active
                  ? "flex bg-gradient-to-b from-[#c0e8bb] to-[#a2d89c] to-[24px] pt-1 pb-[3px] pl-[9px]"
                  : i === 1
                    ? "flex border-b border-dashed border-[#777] pt-1 pb-[3px] pl-[9px]"
                    : "flex pt-1 pb-[3px] pl-[9px]"
              }
            >
              <div className="min-w-0 flex-1">
                <h4 className="text-[12px] leading-4 font-bold text-[#0f2e86]">{o.title}</h4>
                <div className={o.active ? "mt-[5px] text-[12px] leading-[15px] font-bold text-[#5a7f5c]" : "mt-[5px] text-[11px] leading-[15px] text-[#606060]"}>
                  {o.lines.map((l) => (
                    <div key={l}>{l}</div>
                  ))}
                </div>
              </div>
              <button type="button" aria-label={`Favorite ${o.title}`} className="mt-px h-5 w-5">
                <Star />
              </button>
              <button type="button" aria-label={`Remove ${o.title}`} className="mr-[7px] ml-6 flex h-[18px] items-center">
                <CrossMark />
              </button>
            </li>
          ))}
        </ul>
      </div>
    </aside>
  );
}

export default function App() {
  return (
    <div className="flex h-screen min-w-[1200px] flex-col overflow-hidden bg-[#607e9f] font-['Liberation_Sans',Arial,sans-serif]">
      <TitleBar />
      <Toolbar />
      <WorkspaceTabs />
      <PatientHeader />
      <div className="relative -mt-0.5 flex min-h-0 flex-1">
        <Sidebar />
        <OrdersPanel />
        <div className="w-2.5 shrink-0" />
        <OrderSidebar />
        <OrderDialog />
      </div>
    </div>
  );
}
